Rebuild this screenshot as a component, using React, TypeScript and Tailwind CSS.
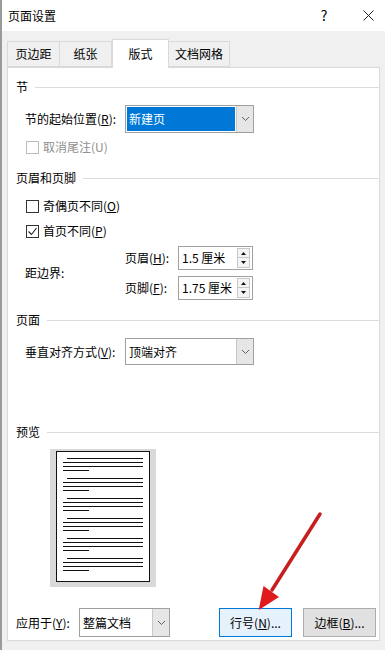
import React from 'react';

// Page setup dialog, "版式" tab

const TABS = [
  { label: '页边距', w: 'w-[53px]' },
  { label: '纸张', w: 'w-[53px]' },
  { label: '版式', w: 'w-[57px]', active: true },
  { label: '文档网格', w: 'w-[62px]' },
];

const Chevron = () => (
  <svg width="9" height="6" viewBox="0 0 9 6" fill="none">
    <path d="M1 1l3.5 3.5L8 1" stroke="#606060" strokeWidth="1" />
  </svg>
);

const GroupHeader = ({ title }: { title: string }) => (
  <div className="flex items-center gap-[7px] h-[14px] pl-[8px]">
    <span className="leading-none">{title}</span>
    <div className="flex-1 h-px bg-[#dcdcdc]" />
  </div>
);

const Checkbox = ({ checked, disabled }: { checked?: boolean; disabled?: boolean }) => (
  <div
    className={`w-[13px] h-[13px] border bg-white flex items-center justify-center ${
      disabled ? 'border-[#bcbcbc]' : 'border-[#333333]'
    }`}
  >
    {checked && (
      <svg width="11" height="11" viewBox="0 0 11 11" fill="none">
        <path d="M1.5 5.5l3 3 5-6.5" stroke="#222" strokeWidth="1.1" />
      </svg>
    )}
  </div>
);

const Select = ({ value, highlight, w }: { value: string; highlight?: boolean; w: string }) => (
  <div className={`${w} h-full border border-[#a0a0a0] bg-white flex`}>
    <div className="flex-1 p-px flex">
      <div
        className={`flex-1 flex items-center pl-[2px] ${
          highlight ? 'bg-[#0078d7] text-white' : ''
        }`}
      >
        {value}
      </div>
    </div>
    <div className="w-[17px] border-l border-[#c8c8c8] bg-[#e6e6e6] flex items-center justify-center">
      <Chevron />
    </div>
  </div>
);

const Spin = ({ value }: { value: string }) => (
  <div className="w-[75px] h-[24px] border border-[#a0a0a0] bg-white flex items-center">
    <span className="flex-1 pl-[3px]">{value}</span>
    <div className="flex flex-col gap-0 mr-[2px]">
      <div className="w-[13px] h-[10px] border border-[#c8c8c8] bg-[#f4f4f4] flex items-center justify-center">
        <svg width="5" height="3" viewBox="0 0 5 3">
          <path d="M0 3L2.5 0L5 3z" fill="#111" />
        </svg>
      </div>
      <div className="w-[13px] h-[10px] border border-t-0 border-[#c8c8c8] bg-[#f4f4f4] flex items-center justify-center">
        <svg width="5" height="3" viewBox="0 0 5 3">
          <path d="M0 0L2.5 3L5 0z" fill="#111" />
        </svg>
      </div>
    </div>
  </div>
);

const PreviewPage = () => {
  const groups = [0, 1, 2, 3, 4, 5];
  return (
    <svg width="94" height="131" viewBox="0 0 94 131">
      <rect x="0.5" y="0.5" width="93" height="130" fill="#fff" stroke="#111" />
      {groups.map((g) => {
        const y = 7.5 + g * 20;
        return (
          <g key={g} stroke="#111" strokeWidth="1">
            <line x1="11" y1={y} x2="87" y2={y} />
            <line x1="7" y1={y + 4} x2="87" y2={y + 4} />
            <line x1="7" y1={y + 8} x2="87" y2={y + 8} />
            <line x1="7" y1={y + 12} x2="33" y2={y + 12} />
          </g>
        );
      })}
    </svg>
  );
};

export default function App() {
  return (
    <div className="relative w-[385px] h-[650px] bg-[#f0f0f0] border-l-2 border-[#9a9a9a] text-[12px] text-black font-['Noto_Sans_CJK_SC',sans-serif] overflow-hidden">
      {/* Title bar */}
      <div className="h-[31px] bg-white flex items-center pl-[6px]">
        <span className="flex-1">页面设置</span>
        <span className="w-[20px] text-center text-[14px] mr-[24px]">?</span>
        <div className="w-[20px] flex justify-center mr-[7px]">
          <svg width="11" height="11" viewBox="0 0 11 11">
            <path d="M0.5 0.5l10 10M10.5 0.5l-10 10" stroke="#222" strokeWidth="1" />
          </svg>
        </div>
      </div>

      {/* Tabs */}
      <div className="pt-[8px] px-[5px]">
        <div className="flex items-end h-[28px]">
          {TABS.map((t) =>
            t.active ? (
              <div
                key={t.label}
                className={`${t.w} h-[29px] -mb-px relative z-10 bg-white border border-b-0 border-[#d9d9d9] flex items-center justify-center`}
              >
                {t.label}
              </div>
            ) : (
              <div
                key={t.label}
                className={`${t.w} h-[26px] bg-[#f0f0f0] border border-[#d9d9d9] -ml-px first:ml-0 flex items-center justify-center`}
              >
                {t.label}
              </div>
            )
          )}
        </div>

        {/* Panel */}
        <div className="h-[574px] bg-white border border-[#d9d9d9] flex flex-col">
          <div className="mt-[12px]">
            <GroupHeader title="节" />
          </div>
          <div className="mt-[11px] h-[28px] flex items-center pl-[17px]">
            <span className="w-[100px]">
              节的起始位置(<span className="underline">R</span>):
            </span>
            <Select value="新建页" highlight w="w-[129px]" />
          </div>
          <div className="mt-[6px] h-[16px] flex items-center pl-[18px] gap-[4px] text-[#8f8f8f]">
            <Checkbox disabled />
            <span>取消尾注(U)</span>
          </div>

          <div className="mt-[16px]">
            <GroupHeader title="页眉和页脚" />
          </div>
          <div className="mt-[13px] h-[16px] flex items-center pl-[18px] gap-[4px]">
            <Checkbox />
            <span>
              奇偶页不同(<span className="underline">O</span>)
            </span>
          </div>
          <div className="mt-[9px] h-[16px] flex items-center pl-[18px] gap-[4px]">
            <Checkbox checked />
            <span>
              首页不同(<span className="underline">P</span>)
            </span>
          </div>
          <div className="mt-[7px] h-[54px] flex items-center pl-[17px]">
            <span className="w-[100px]">距边界:</span>
            <div className="flex flex-col gap-[6px]">
              <div className="flex items-center">
                <span className="w-[53px]">
                  页眉(<span className="underline">H</span>):
                </span>
                <Spin value="1.5 厘米" />
              </div>
              <div className="flex items-center">
                <span className="w-[53px]">
                  页脚(<span className="underline">F</span>):
                </span>
                <Spin value="1.75 厘米" />
              </div>
            </div>
          </div>

          <div className="mt-[13px]">
            <GroupHeader title="页面" />
          </div>
          <div className="mt-[11px] h-[27px] flex items-center pl-[17px]">
            <span className="w-[100px]">
              垂直对齐方式(<span className="underline">V</span>):
            </span>
            <Select value="顶端对齐" w="w-[129px]" />
          </div>

          <div className="mt-[60px]">
            <GroupHeader title="预览" />
          </div>
          <div className="mt-[10px] ml-[42px] w-[106px] h-[138px] bg-[#d9d9d9] pl-[6px] pt-[2px]">
            <PreviewPage />
          </div>

          <div className="mt-[21px] h-[29px] flex items-center pl-[8px]">
            <span className="w-[63px]">
              应用于(<span className="underline">Y</span>):
            </span>
            <Select value="整篇文档" w="w-[91px]" />
            <button className="ml-[49px] w-[73px] h-[29px] bg-[#e5f1fb] border border-[#0078d7] flex items-center justify-center">
              行号(<span className="underline">N</span>)...
            </button>
            <button className="ml-[11px] w-[73px] h-[29px] bg-[#e1e1e1] border border-[#adadad] flex items-center justify-center">
              边框(<span className="underline">B</span>)...
            </button>
          </div>
        </div>
      </div>

      {/* Red annotation arrow */}
      <svg className="absolute left-0 top-0 pointer-events-none" width="385" height="650" viewBox="0 0 385 650">
        <line x1="318" y1="514" x2="270" y2="590" stroke="#c81e1e" strokeWidth="3.5" strokeLinecap="round" />
        <path d="M256.7 610L261.5 586L277 597z" fill="#e01b1b" />
      </svg>
    </div>
  );
}
